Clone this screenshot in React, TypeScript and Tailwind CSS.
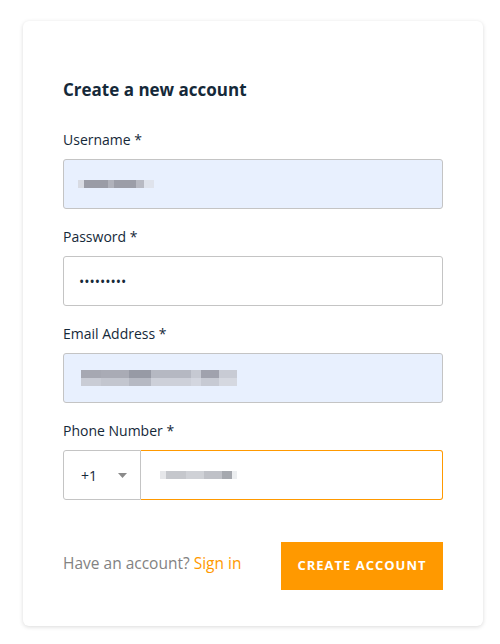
import React from "react";

const font = { fontFamily: '"Open Sans", "Liberation Sans", sans-serif' };

type FieldProps = {
  label: string;
  children: React.ReactNode;
};

const Field: React.FC<FieldProps> = ({ label, children }) => (
  <div className="flex flex-col">
    <label className="text-[14px] leading-[20px] text-[#152939] mb-[9px]">{label}</label>
    {children}
  </div>
);

// pixelated blur standing in for masked values
const Blur: React.FC<{ rows: { w: number; shade: string }[][] }> = ({ rows }) => (
  <div className="flex flex-col blur-[0.6px]">
    {rows.map((row, i) => (
      <div key={i} className="flex h-[8px]">
        {row.map((c, j) => (
          <div key={j} className={c.shade} style={{ width: c.w }} />
        ))}
      </div>
    ))}
  </div>
);

export default function App() {
  return (
    <div className="min-h-screen bg-white" style={font}>
      <div className="ml-[23px] mt-[21px] w-[460px] rounded-[6px] bg-white shadow-[0_1px_4px_rgba(0,0,0,0.15)] px-[40px] pt-[57px] pb-[36px]">
        <h1 className="text-[17px] leading-[24px] font-bold text-[#152939] mb-[28px]">
          Create a new account
        </h1>

        <div className="flex flex-col gap-[18px]">
          <Field label="Username *">
            <div className="h-[50px] rounded-[3px] border border-[#c4c4c4] bg-[#e8f0fe] flex items-center pl-[14px]">
              <Blur
                rows={[
                  [
                    { w: 6, shade: "bg-[#d8dbe3]" },
                    { w: 24, shade: "bg-[#9a9ca6]" },
                    { w: 6, shade: "bg-[#b0b2bb]" },
                    { w: 22, shade: "bg-[#9c9ea8]" },
                    { w: 8, shade: "bg-[#b8bac3]" },
                    { w: 10, shade: "bg-[#dfe3ec]" },
                  ],
                ]}
              />
            </div>
          </Field>

          <Field label="Password *">
            <div className="h-[50px] rounded-[3px] border border-[#c4c4c4] bg-white flex items-center pl-[15px] text-[#152939] text-[14px]">
              •••••••••
            </div>
          </Field>

          <Field label="Email Address *">
            <div className="h-[50px] rounded-[3px] border border-[#c4c4c4] bg-[#e8f0fe] flex items-center pl-[17px]">
              <Blur
                rows={[
                  [
                    { w: 20, shade: "bg-[#a6a8b2]" },
                    { w: 28, shade: "bg-[#a9abb5]" },
                    { w: 22, shade: "bg-[#979aa5]" },
                    { w: 40, shade: "bg-[#b5b8c2]" },
                    { w: 10, shade: "bg-[#c6c9d2]" },
                    { w: 18, shade: "bg-[#a0a2ad]" },
                    { w: 18, shade: "bg-[#c8cbd4]" },
                  ],
                  [
                    { w: 20, shade: "bg-[#c9ccd5]" },
                    { w: 28, shade: "bg-[#c3c6cf]" },
                    { w: 22, shade: "bg-[#b6b9c3]" },
                    { w: 40, shade: "bg-[#cdd0d9]" },
                    { w: 10, shade: "bg-[#d3d6df]" },
                    { w: 18, shade: "bg-[#c7cad3]" },
                    { w: 18, shade: "bg-[#d5d8e0]" },
                  ],
                ]}
              />
            </div>
          </Field>

          <Field label="Phone Number *">
            <div className="flex h-[50px]">
              <div className="w-[78px] rounded-l-[3px] border border-[#c4c4c4] bg-white flex items-center justify-between pl-[17px] pr-[13px] text-[14px] text-[#152939]">
                <span>+1</span>
                <svg width="9" height="5" viewBox="0 0 9 5">
                  <path d="M0 0 L9 0 L4.5 5 Z" fill="#8a8a8a" />
                </svg>
              </div>
              <div className="flex-1 rounded-r-[3px] border border-[#ff9900] border-l-0 bg-white flex items-center pl-[19px]">
                <Blur
                  rows={[
                    [
                      { w: 6, shade: "bg-[#e6e7ea]" },
                      { w: 20, shade: "bg-[#c5c7cc]" },
                      { w: 18, shade: "bg-[#cfd1d6]" },
                      { w: 18, shade: "bg-[#bfc1c7]" },
                      { w: 10, shade: "bg-[#a5a8ae]" },
                      { w: 5, shade: "bg-[#eceef0]" },
                    ],
                  ]}
                />
              </div>
            </div>
          </Field>
        </div>

        <div className="mt-[42px] flex items-center justify-between">
          <div className="text-[15.5px] text-[#828282] -mt-[4px]">
            Have an account? <span className="text-[#ff9900]">Sign in</span>
          </div>
          <button className="h-[48px] w-[162px] bg-[#ff9900] text-white text-[13px] font-bold tracking-[1px]">
            CREATE ACCOUNT
          </button>
        </div>
      </div>
    </div>
  );
}
